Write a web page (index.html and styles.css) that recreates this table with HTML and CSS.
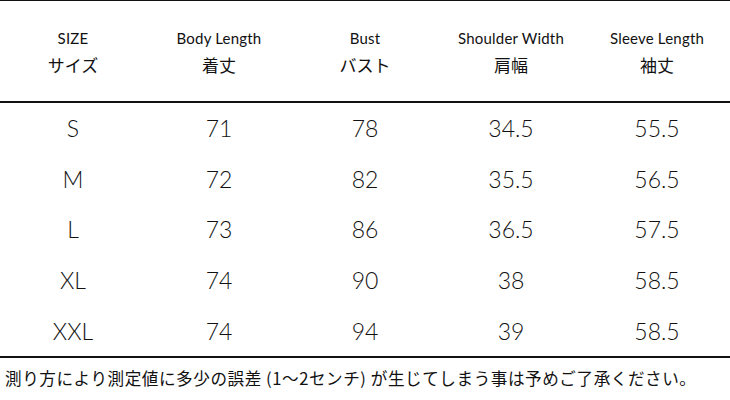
FILE: index.html
```html
<!DOCTYPE html>
<html lang="ja">
<head>
<meta charset="utf-8">
<link rel="stylesheet" href="styles.css">
</head>
<body>
<div class="chart">
  <div class="row head">
    <div class="cell"><span class="en">SIZE</span><span class="ja">サイズ</span></div>
    <div class="cell"><span class="en">Body Length</span><span class="ja">着丈</span></div>
    <div class="cell"><span class="en">Bust</span><span class="ja">バスト</span></div>
    <div class="cell"><span class="en">Shoulder Width</span><span class="ja">肩幅</span></div>
    <div class="cell"><span class="en">Sleeve Length</span><span class="ja">袖丈</span></div>
  </div>
  <div class="body">
    <div class="row"><div class="cell">S</div><div class="cell">71</div><div class="cell">78</div><div class="cell">34.5</div><div class="cell">55.5</div></div>
    <div class="row"><div class="cell">M</div><div class="cell">72</div><div class="cell">82</div><div class="cell">35.5</div><div class="cell">56.5</div></div>
    <div class="row"><div class="cell">L</div><div class="cell">73</div><div class="cell">86</div><div class="cell">36.5</div><div class="cell">57.5</div></div>
    <div class="row"><div class="cell">XL</div><div class="cell">74</div><div class="cell">90</div><div class="cell">38</div><div class="cell">58.5</div></div>
    <div class="row"><div class="cell">XXL</div><div class="cell">74</div><div class="cell">94</div><div class="cell">39</div><div class="cell">58.5</div></div>
  </div>
  <p class="note">測り方により測定値に多少の誤差 (1〜2センチ) が生じてしまう事は予めご了承ください。</p>
</div>
</body>
</html>
```

FILE: styles.css
```css
html, body {
  margin: 0;
  padding: 0;
  background: #fff;
}
body {
  width: 730px;
  height: 400px;
  overflow: hidden;
  font-family: "Lato", "Noto Sans", "Noto Sans CJK JP", sans-serif;
  font-weight: 300;
  color: #111;
}
.chart {
  border-top: 1px solid #111;
}
.row {
  display: grid;
  grid-template-columns: repeat(5, 1fr);
}
.head {
  height: 100px;
  border-bottom: 2px solid #111;
  align-items: center;
}
.head .cell {
  display: flex;
  flex-direction: column;
  align-items: center;
  gap: 6px;
  padding-top: 2px;
}
.en {
  font-size: 15px;
  font-weight: 400;
  line-height: 20px;
  letter-spacing: 0.2px;
}
.ja {
  font-family: "Noto Sans CJK JP", sans-serif;
  font-weight: 400;
  font-size: 17px;
  line-height: 22px;
}
.body {
  border-bottom: 2px solid #111;
}
.body .row {
  height: 50.6px;
  align-items: center;
}
.body .cell {
  text-align: center;
  font-size: 23px;
  line-height: 30px;
}
.note {
  margin: 8px 0 0 5px;
  font-family: "Noto Sans CJK JP", sans-serif;
  font-weight: 400;
  font-size: 16.6px;
  letter-spacing: 0.55px;
  line-height: 24px;
  white-space: nowrap;
}
```
